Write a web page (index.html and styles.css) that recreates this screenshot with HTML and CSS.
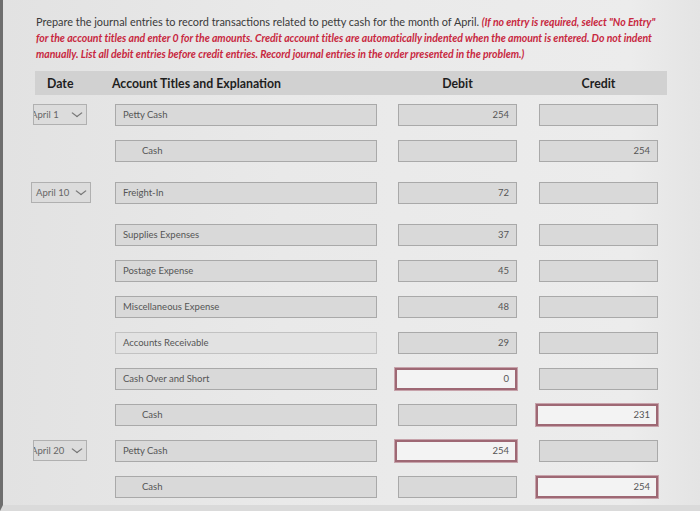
FILE: index.html
```html
<!DOCTYPE html>
<html>
<head>
<meta charset="utf-8">
<link rel="stylesheet" href="styles.css">
</head>
<body>
<div class="page">
  <p class="intro">Prepare the journal entries to record transactions related to petty cash for the month of April. <em class="note">(If no entry is required, select "No Entry" for the account titles and enter 0 for the amounts. Credit account titles are automatically indented when the amount is entered. Do not indent manually. List all debit entries before credit entries. Record journal entries in the order presented in the problem.)</em></p>

  <div class="journal">
    <div class="head">
      <div class="h-date">Date</div>
      <div class="h-acct">Account Titles and Explanation</div>
      <div class="h-num">Debit</div>
      <div></div>
      <div class="h-num">Credit</div>
    </div>

    <div class="row">
      <div class="cell-date"><div class="select clip">April 1<span class="chev"></span></div></div>
      <div class="cell-acct"><div class="box">Petty Cash</div></div>
      <div class="cell-num"><div class="box num">254</div></div>
      <div class="cell-num"><div class="box num"></div></div>
    </div>
    <div class="row more">
      <div class="cell-date"></div>
      <div class="cell-acct"><div class="box indent">Cash</div></div>
      <div class="cell-num"><div class="box num"></div></div>
      <div class="cell-num"><div class="box num">254</div></div>
    </div>
    <div class="row more">
      <div class="cell-date"><div class="select wide">April 10<span class="chev"></span></div></div>
      <div class="cell-acct"><div class="box">Freight-In</div></div>
      <div class="cell-num"><div class="box num">72</div></div>
      <div class="cell-num"><div class="box num"></div></div>
    </div>
    <div class="row">
      <div class="cell-date"></div>
      <div class="cell-acct"><div class="box">Supplies Expenses</div></div>
      <div class="cell-num"><div class="box num">37</div></div>
      <div class="cell-num"><div class="box num"></div></div>
    </div>
    <div class="row">
      <div class="cell-date"></div>
      <div class="cell-acct"><div class="box">Postage Expense</div></div>
      <div class="cell-num"><div class="box num">45</div></div>
      <div class="cell-num"><div class="box num"></div></div>
    </div>
    <div class="row">
      <div class="cell-date"></div>
      <div class="cell-acct"><div class="box">Miscellaneous Expense</div></div>
      <div class="cell-num"><div class="box num">48</div></div>
      <div class="cell-num"><div class="box num"></div></div>
    </div>
    <div class="row">
      <div class="cell-date"></div>
      <div class="cell-acct"><div class="box light">Accounts Receivable</div></div>
      <div class="cell-num"><div class="box num">29</div></div>
      <div class="cell-num"><div class="box num"></div></div>
    </div>
    <div class="row">
      <div class="cell-date"></div>
      <div class="cell-acct"><div class="box">Cash Over and Short</div></div>
      <div class="cell-num"><div class="box num error">0</div></div>
      <div class="cell-num"><div class="box num"></div></div>
    </div>
    <div class="row">
      <div class="cell-date"></div>
      <div class="cell-acct"><div class="box indent">Cash</div></div>
      <div class="cell-num"><div class="box num"></div></div>
      <div class="cell-num"><div class="box num error">231</div></div>
    </div>
    <div class="row">
      <div class="cell-date"><div class="select clip">April 20<span class="chev"></span></div></div>
      <div class="cell-acct"><div class="box">Petty Cash</div></div>
      <div class="cell-num"><div class="box num error">254</div></div>
      <div class="cell-num"><div class="box num"></div></div>
    </div>
    <div class="row">
      <div class="cell-date"></div>
      <div class="cell-acct"><div class="box indent">Cash</div></div>
      <div class="cell-num"><div class="box num"></div></div>
      <div class="cell-num"><div class="box num error">254</div></div>
    </div>
  </div>
</div>
</body>
</html>
```

FILE: styles.css
```css
html, body {
  margin: 0;
  padding: 0;
}
body {
  background: #e7e7e7;
  font-family: Lato, "Open Sans", sans-serif;
  width: 700px;
  height: 511px;
  overflow: hidden;
}
.page {
  height: 505px;
  border-left: 3px solid #6e6e6e;
  border-bottom: 6px solid #dadada;
  box-sizing: content-box;
  background: linear-gradient(90deg, #e2e2e2 0%, #e9e9e9 40%, #ececec 90%, #e4e4e4 100%);
}
.intro {
  margin: 0;
  padding: 14px 0 0 33px;
  width: 628px;
  font-size: 10.9px;
  line-height: 16px;
  color: #3a3a3a;
}
.note {
  color: #c8283f;
  font-weight: 700;
  font-size: 10.5px;
  letter-spacing: -0.05px;
}
.journal {
  margin: 9px 0 0 30px;
}
.head {
  display: grid;
  grid-template-columns: 77px 286px 119px 22px 119px auto;
  margin-left: 2px;
  width: 632px;
  height: 24px;
  align-items: center;
  background: #d1d1d1;
  font-size: 12.3px;
  font-weight: 700;
  color: #1e1e1e;
  margin-bottom: 9px;
}
.h-date {
  padding-left: 12px;
}
.h-num {
  text-align: center;
}
.row {
  display: grid;
  grid-template-columns: 82px 283px 141px 119px;
  height: 22px;
  margin-bottom: 14px;
  font-size: 9.5px;
  color: #555;
}
.row.more {
  margin-bottom: 20px;
}
.select {
  position: relative;
  width: 54px;
  height: 21px;
  box-sizing: border-box;
  border: 1px solid #b0b0b0;
  background: #dcdcdc;
  line-height: 19px;
  overflow: hidden;
  white-space: nowrap;
  color: #666;
}
.select.clip {
  text-indent: -3px;
}
.select.wide {
  width: 60px;
  margin-left: -2px;
  padding-left: 4px;
}
.chev {
  position: absolute;
  right: 6px;
  top: 5px;
  width: 5px;
  height: 5px;
  border-right: 1px solid #777;
  border-bottom: 1px solid #777;
  transform: scaleX(1.3) rotate(45deg);
}
.box {
  box-sizing: border-box;
  height: 22px;
  border: 1px solid #a9a9a9;
  background: #d9d9d9;
  line-height: 20px;
  padding: 0 7px;
  white-space: nowrap;
}
.cell-acct .box {
  width: 262px;
}
.cell-num .box {
  width: 119px;
}
.box.indent {
  padding-left: 26px;
}
.box.light {
  background: #e2e2e2;
  border-color: #c2c2c2;
}
.box.num {
  text-align: right;
}
.box.error {
  background: #f3f3f3;
  border: 2px solid #9e6874;
  box-shadow: 0 0 0 1px #c7a3ab;
  line-height: 18px;
  padding-right: 6px;
  margin-left: -3px;
  width: 122px !important;
  color: #555;
}
```
